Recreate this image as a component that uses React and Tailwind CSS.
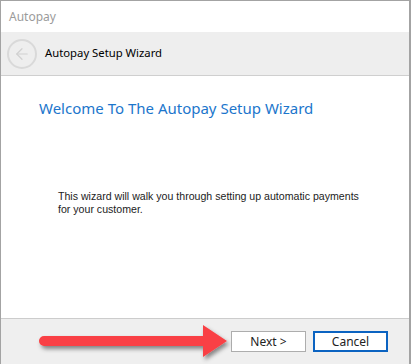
import { ArrowLeft } from "lucide-react";

const ui = { fontFamily: '"Segoe UI", "Noto Sans", "Open Sans", sans-serif' };
const classic = { fontFamily: '"Liberation Sans", Arial, sans-serif' };

const Arrow = () => (
  <svg
    className="absolute left-0 top-0 pointer-events-none"
    width="412"
    height="364"
    viewBox="0 0 412 364"
  >
    <defs>
      <filter id="sh" x="-20%" y="-50%" width="140%" height="200%">
        <feDropShadow dx="2" dy="3" stdDeviation="2" floodColor="#000" floodOpacity="0.45" />
      </filter>
    </defs>
    <g filter="url(#sh)" fill="#f94144">
      <path d="M44 336 L203 336 L203 325 L227 341 L203 357 L203 346 L44 346 A5 5 0 0 1 44 336 Z" />
    </g>
  </svg>
);

export default function App() {
  return (
    <div className="relative w-[412px] h-[364px] bg-white overflow-hidden">
      <div className="h-full flex flex-col border-l border-t border-r-2 border-[#a3a3a3] mr-[1px]">
        {/* title bar */}
        <div className="h-[31px] flex items-center pl-[8px] text-[12px] text-[#9b9b9b]" style={ui}>
          Autopay
        </div>

        {/* header */}
        <div className="h-[44px] flex items-center bg-[#eeeeee] border-b border-[#cfcfcf]">
          <div className="ml-[6px] w-[30px] h-[30px] rounded-full border-2 border-[#d9d9d9] flex items-center justify-center">
            <ArrowLeft size={18} strokeWidth={1.6} color="#d0d0d0" />
          </div>
          <div className="ml-[8px] text-[11.3px] text-black" style={ui}>
            Autopay Setup Wizard
          </div>
        </div>

        {/* body */}
        <div className="flex-1 flex flex-col">
          <div className="pl-[38px] pt-[21px] text-[15px] text-[#1c76cc] leading-[22px]" style={ui}>
            Welcome To The Autopay Setup Wizard
          </div>
          <div className="pl-[57px] pt-[71px] text-[10.6px] leading-[13px] text-[#222]" style={classic}>
            <div>This wizard will walk you through setting up automatic payments</div>
            <div>for your customer.</div>
          </div>
        </div>

        {/* footer */}
        <div className="h-[46px] bg-[#efefef] border-t border-[#cccccc] flex items-start justify-end pt-[12px] pr-[21px] gap-[7px]">
          <button
            className="w-[75px] h-[21px] bg-white border border-[#adadad] text-[12px] text-[#222] leading-none"
            style={ui}
          >
            Next &gt;
          </button>
          <button
            className="w-[75px] h-[21px] bg-white border-2 border-[#0b63c1] text-[12px] text-[#222] leading-none"
            style={ui}
          >
            Cancel
          </button>
        </div>
      </div>
      <Arrow />
    </div>
  );
}
